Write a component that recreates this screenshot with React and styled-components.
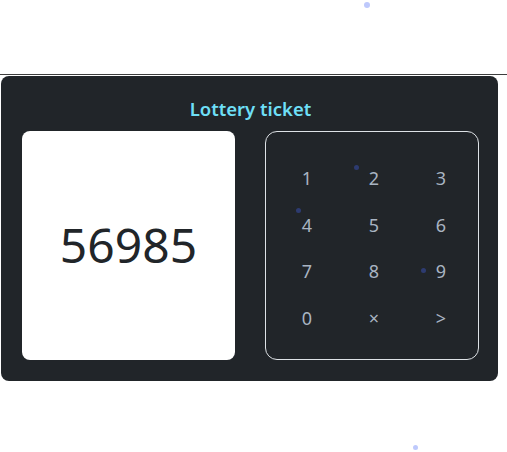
import React from "react";
import styled, { createGlobalStyle } from "styled-components";

const Global = createGlobalStyle`
  html, body { margin: 0; padding: 0; background: #fff; }
  body { font-family: "Noto Sans", "Open Sans", sans-serif; }
`;

const Page = styled.div`
  position: relative;
  width: 507px;
  height: 452px;
  overflow: hidden;
  padding-top: 74px;
  box-sizing: border-box;
`;

const Rule = styled.hr`
  margin: 0 0 1px;
  border: 0;
  border-top: 1px solid #3d3d3d;
`;

const Card = styled.section`
  margin-left: 1px;
  width: 497px;
  height: 305px;
  box-sizing: border-box;
  background: #212529;
  border-radius: 8px;
  padding: 20px 19px 21px 21px;
  display: flex;
  flex-direction: column;
  align-items: stretch;
`;

const Title = styled.h5`
  margin: 0 0 10px;
  text-align: center;
  color: #6edff6;
  font-family: "Noto Sans", "Open Sans", sans-serif;
  font-size: 18.5px;
  font-weight: 600;
  line-height: 25px;
`;

const Body = styled.div`
  display: flex;
  gap: 30px;
  flex: 1;
`;

const NumberBox = styled.div`
  width: 213px;
  background: #fff;
  border-radius: 8px;
  display: flex;
  align-items: center;
  justify-content: center;
  color: #212529;
  font-family: "Noto Sans", "Open Sans", sans-serif;
  font-size: 48px;
  font-weight: 400;
  padding-bottom: 3px;
  box-sizing: border-box;
`;

const Keypad = styled.div`
  width: 214px;
  box-sizing: border-box;
  border: 1px solid #dee2e6;
  border-radius: 12px;
  display: grid;
  grid-template-columns: repeat(3, 67px);
  grid-auto-rows: 46.7px;
  justify-content: center;
  align-content: center;
  padding: 5px 0 0 4px;
`;

const Key = styled.button`
  background: none;
  border: 0;
  padding: 0;
  color: #a9b4c2;
  font-family: "Noto Sans", "Open Sans", sans-serif;
  font-size: 18px;
  display: flex;
  align-items: center;
  justify-content: center;
  cursor: pointer;
`;

const Dot = styled.span`
  position: absolute;
  width: ${(p) => p.$s}px;
  height: ${(p) => p.$s}px;
  border-radius: 50%;
  background: rgba(70, 100, 245, 0.35);
  pointer-events: none;
`;

const dots = [
  { x: 367, y: 5, s: 6 },
  { x: 356, y: 167, s: 5 },
  { x: 298, y: 210, s: 5 },
  { x: 423, y: 270, s: 5 },
  { x: 415, y: 447, s: 5 },
];

const keys = ["1", "2", "3", "4", "5", "6", "7", "8", "9", "0", "×", ">"];

export default function App() {
  return (
    <Page>
      <Global />
      <Rule />
      <Card>
        <Title>Lottery ticket</Title>
        <Body>
          <NumberBox>56985</NumberBox>
          <Keypad>
            {keys.map((k) => (
              <Key key={k}>{k}</Key>
            ))}
          </Keypad>
        </Body>
      </Card>
      {dots.map((d, i) => (
        <Dot
          key={i}
          $s={d.s}
          style={{ left: d.x - d.s / 2, top: d.y - d.s / 2 }}
        />
      ))}
    </Page>
  );
}
